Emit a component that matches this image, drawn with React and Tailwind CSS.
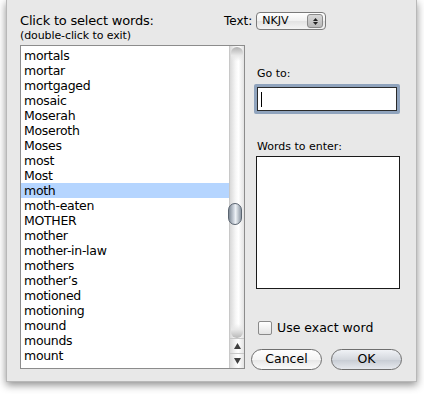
import React from "react";

const words = [
  "mortals","mortar","mortgaged","mosaic","Moserah","Moseroth","Moses","most","Most","moth",
  "moth-eaten","MOTHER","mother","mother-in-law","mothers","mother\u2019s","motioned","motioning","mound","mounds","mount",
];

export default function App() {
  return (
    <div className="w-[424px] h-[394px] bg-white overflow-hidden" style={{ fontFamily: '"DejaVu Sans", "Liberation Sans", sans-serif' }}>
      <div className="ml-[6px] w-[411px] h-[382px] bg-[#e8e8e8] border-x border-b border-[#b8b8b8] shadow-[0_3px_8px_rgba(0,0,0,0.45)] flex">
        {/* left column */}
        <div className="pl-[13px] pt-[13px] flex flex-col">
          <div className="text-[13px] leading-[16px] text-black tracking-[-0.2px]">Click to select words:</div>
          <div className="text-[11px] leading-[13px] text-black tracking-[-0.1px]">(double-click to exit)</div>
          <div className="mt-[3px] w-[225px] h-[324px] bg-white border border-[#8c8c8c] flex">
            <div className="flex-1 pt-[2px]">
              {words.map((w) => (
                <div
                  key={w}
                  className={`h-[15px] leading-[15px] pl-[3px] text-[12.5px] text-black tracking-[-0.3px] ${w === "moth" ? "bg-[#b5d5ff]" : ""}`}
                >
                  {w}
                </div>
              ))}
            </div>
            {/* scrollbar */}
            <div className="w-[15px] border-l border-[#c8c8c8] flex flex-col bg-[linear-gradient(to_right,#d9d9d9,#f6f6f6_40%,#ffffff_60%,#e3e3e3)]">
              <div className="flex-1 relative">
                <div className="absolute left-[1px] top-[1px] w-[12px] h-[14px] rounded-t-[7px] bg-[linear-gradient(to_bottom,#b0b0b0,#e8e8e8_60%,transparent)]" />
                <div className="absolute left-[-2px] top-[157px] w-[14px] h-[22px] rounded-[7px] border border-[#5a6470] bg-[linear-gradient(to_right,#7f8a96,#d8dee6_45%,#eef2f6_55%,#8d98a4)]" />
                <div className="absolute left-[1px] bottom-[0px] w-[12px] h-[14px] rounded-b-[7px] bg-[linear-gradient(to_top,#b8b8b8,#e8e8e8_60%,transparent)]" />
              </div>
              <div className="h-[15px] border-t border-[#c8c8c8] flex items-center justify-center">
                <svg width="7" height="6" viewBox="0 0 7 6"><polygon points="3.5,0 7,6 0,6" fill="#404040" /></svg>
              </div>
              <div className="h-[15px] border-t border-[#c8c8c8] flex items-center justify-center">
                <svg width="7" height="6" viewBox="0 0 7 6"><polygon points="0,0 7,0 3.5,6" fill="#404040" /></svg>
              </div>
            </div>
          </div>
        </div>

        {/* right column */}
        <div className="ml-[6px] pt-[12px] flex flex-col w-[152px]">
          <div className="flex items-center ml-[-27px]">
            <span className="text-[12px] text-black mr-[4px]">Text:</span>
            <div className="w-[70px] h-[18px] rounded-[4px] border border-[#7a7a7a] bg-[linear-gradient(to_bottom,#ffffff,#f0f0f0_50%,#e2e2e2_51%,#f4f4f4)] flex items-center">
              <span className="flex-1 pl-[5px] text-[11px] text-black leading-[16px]">NKJV</span>
              <div className="w-[16px] h-[14px] mr-[2px] rounded-[3px] bg-[linear-gradient(to_bottom,#d8d8d8,#b8b8b8)] border border-[#8a8a8a] flex flex-col items-center justify-center gap-[1px]">
                <svg width="5" height="3" viewBox="0 0 5 3"><polygon points="2.5,0 5,3 0,3" fill="#222" /></svg>
                <svg width="5" height="3" viewBox="0 0 5 3"><polygon points="0,0 5,0 2.5,3" fill="#222" /></svg>
              </div>
            </div>
          </div>

          <div className="mt-[37px] ml-[6px] text-[11px] leading-[13px] text-black">Go to:</div>
          <div className="mt-[4px] ml-[3px] w-[146px] h-[30px] rounded-[2px] border-[3px] border-[#8fa3bd] p-0">
            <div className="w-full h-full bg-white border border-[#2a2a2a] flex items-center pl-[3px]">
              <div className="w-[1px] h-[15px] bg-black" />
            </div>
          </div>

          <div className="mt-[26px] ml-[6px] text-[11px] leading-[13px] text-black">Words to enter:</div>
          <div className="mt-[3px] ml-[5px] w-[144px] h-[133px] bg-white border border-[#1a1a1a]" />

          <div className="mt-[30px] ml-[7px] flex items-center">
            <div className="w-[14px] h-[14px] rounded-[2px] border border-[#8a8a8a] bg-[linear-gradient(to_bottom,#ffffff,#e4e4e4)]" />
            <span className="ml-[5px] text-[12.5px] text-black">Use exact word</span>
          </div>

          <div className="mt-[11px] flex gap-[9px]">
            <div className="w-[71px] h-[21px] rounded-full border border-[#6e6e6e] bg-[linear-gradient(to_bottom,#ffffff,#f4f4f4_50%,#e6e6e6_51%,#fbfbfb)] flex items-center justify-center text-[12.5px] text-black">Cancel</div>
            <div className="w-[71px] h-[21px] rounded-full border border-[#6e6e6e] bg-[linear-gradient(to_bottom,#f0f2f6,#d4d8de_50%,#c6cbd3_51%,#e6e9ee)] flex items-center justify-center text-[12.5px] text-black">OK</div>
          </div>
        </div>
      </div>
    </div>
  );
}
